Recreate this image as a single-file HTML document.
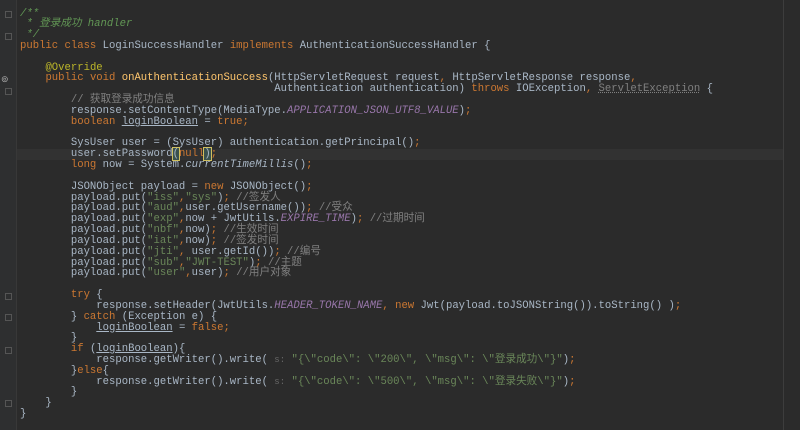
<!DOCTYPE html>
<html><head><meta charset="utf-8"><style>
html,body{margin:0;background:#2b2b2b;width:800px;height:430px;overflow:hidden}
body{position:relative}
.g{position:absolute;left:0;top:0;width:16px;height:430px;background:#2e2f30}
.gl{position:absolute;left:16px;top:0;width:1px;height:430px;background:#383838}
.rm{position:absolute;left:783px;top:0;width:1px;height:430px;background:#3d3d3d}
.hl{position:absolute;left:17px;top:149px;width:766px;height:11px;background:#323232}
.code{position:absolute;left:20px;top:8.5px;margin:0;font-family:"Liberation Mono","Noto Sans CJK SC",monospace;font-size:10.6px;color:#a9b7c6;white-space:normal}
.code div{height:10.84px;line-height:10.84px;overflow:visible;white-space:pre}
.k{color:#cc7832}.c{color:#808080}.d{color:#629755;font-style:italic}.s{color:#6a8759}.a{color:#bbb529}.m{color:#ffc66d}.p{color:#9876aa;font-style:italic}.i{font-style:italic}.u{text-decoration:underline}.w{color:#808080;text-decoration:underline dotted}.h{color:#666;font-size:9px}.b{background:#3b514d;outline:1px solid #d0c060}
.f{position:absolute;left:5px;width:5px;height:5px;border:1px solid #555}
</style></head><body>
<div class="g"></div><div class="gl"></div><div class="rm"></div><div class="hl"></div>
<div class="f" style="top:11px"></div><div class="f" style="top:33px"></div><div class="f" style="top:88px"></div><div class="f" style="top:293px"></div><div class="f" style="top:314px"></div><div class="f" style="top:347px"></div><div class="f" style="top:400px"></div>
<div style="position:absolute;left:1px;top:74px;font:9px 'Liberation Sans';color:#aaa">⊚</div>
<div class="code"><div><span class="d">/**</span></div><div><span class="d"> * 登录成功 handler</span></div><div><span class="d"> */</span></div><div><span class="k">public class </span>LoginSuccessHandler <span class="k">implements </span>AuthenticationSuccessHandler {</div><div></div><div>    <span class="a">@Override</span></div><div>    <span class="k">public void </span><span class="m">onAuthenticationSuccess</span>(HttpServletRequest request<span class="k">, </span>HttpServletResponse response<span class="k">,</span></div><div>                                        Authentication authentication) <span class="k">throws </span>IOException<span class="k">, </span><span class="w">ServletException</span> {</div><div>        <span class="c">// 获取登录成功信息</span></div><div>        response.setContentType(MediaType.<span class="p">APPLICATION_JSON_UTF8_VALUE</span>)<span class="k">;</span></div><div>        <span class="k">boolean </span><span class="u">loginBoolean</span> = <span class="k">true;</span></div><div></div><div>        SysUser user = (SysUser) authentication.getPrincipal()<span class="k">;</span></div><div>        user.setPassword<span class="b">(</span><span class="k">null</span><span class="b">)</span><span class="k">;</span></div><div>        <span class="k">long </span>now = System.<span class="i">currentTimeMillis</span>()<span class="k">;</span></div><div></div><div>        JSONObject payload = <span class="k">new </span>JSONObject()<span class="k">;</span></div><div>        payload.put(<span class="s">"iss"</span><span class="k">,</span><span class="s">"sys"</span>)<span class="k">; </span><span class="c">//签发人</span></div><div>        payload.put(<span class="s">"aud"</span><span class="k">,</span>user.getUsername())<span class="k">; </span><span class="c">//受众</span></div><div>        payload.put(<span class="s">"exp"</span><span class="k">,</span>now + JwtUtils.<span class="p">EXPIRE_TIME</span>)<span class="k">; </span><span class="c">//过期时间</span></div><div>        payload.put(<span class="s">"nbf"</span><span class="k">,</span>now)<span class="k">; </span><span class="c">//生效时间</span></div><div>        payload.put(<span class="s">"iat"</span><span class="k">,</span>now)<span class="k">; </span><span class="c">//签发时间</span></div><div>        payload.put(<span class="s">"jti"</span><span class="k">, </span>user.getId())<span class="k">; </span><span class="c">//编号</span></div><div>        payload.put(<span class="s">"sub"</span><span class="k">,</span><span class="s">"JWT-TEST"</span>)<span class="k">; </span><span class="c">//主题</span></div><div>        payload.put(<span class="s">"user"</span><span class="k">,</span>user)<span class="k">; </span><span class="c">//用户对象</span></div><div></div><div>        <span class="k">try </span>{</div><div>            response.setHeader(JwtUtils.<span class="p">HEADER_TOKEN_NAME</span><span class="k">, new </span>Jwt(payload.toJSONString()).toString() )<span class="k">;</span></div><div>        } <span class="k">catch </span>(Exception e) {</div><div>            <span class="u">loginBoolean</span> = <span class="k">false;</span></div><div>        }</div><div>        <span class="k">if </span>(<span class="u">loginBoolean</span>){</div><div>            response.getWriter().write( <span class="h">s:</span> <span class="s">"{\"code\": \"200\", \"msg\": \"登录成功\"}"</span>)<span class="k">;</span></div><div>        }<span class="k">else</span>{</div><div>            response.getWriter().write( <span class="h">s:</span> <span class="s">"{\"code\": \"500\", \"msg\": \"登录失败\"}"</span>)<span class="k">;</span></div><div>        }</div><div>    }</div><div>}</div></div>
</body></html>
